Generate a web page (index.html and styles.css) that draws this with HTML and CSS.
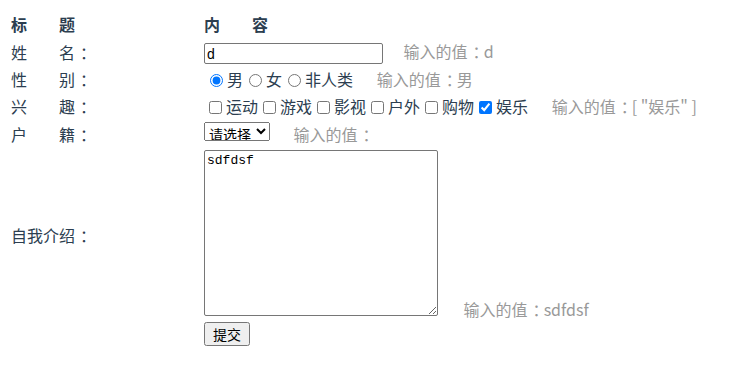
FILE: index.html
```html
<!DOCTYPE html>
<html lang="zh-CN">
<head>
    <meta charset="UTF-8">
    <title>表单绑定</title>
    <link rel="stylesheet" href="styles.css">
</head>
<body>
    <div id="app">
        <table class="form-table">
            <colgroup>
                <col class="col-label">
                <col>
            </colgroup>
            <tr>
                <th>标&emsp;&emsp;题</th>
                <th>内&emsp;&emsp;容</th>
            </tr>
            <tr>
                <td>姓&emsp;&emsp;名<span class="colon">：</span></td>
                <td>
                    <input type="text" class="text-input" value="d">
                    <span class="echo">输入的值<span class="colon">：</span>d</span>
                </td>
            </tr>
            <tr>
                <td>性&emsp;&emsp;别<span class="colon">：</span></td>
                <td>
                    <input type="radio" name="sex" checked>男<input type="radio" name="sex">女<input type="radio" name="sex">非人类
                    <span class="echo">输入的值<span class="colon">：</span>男</span>
                </td>
            </tr>
            <tr>
                <td>兴&emsp;&emsp;趣<span class="colon">：</span></td>
                <td>
                    <input type="checkbox">运动<input type="checkbox">游戏<input type="checkbox">影视<input type="checkbox">户外<input type="checkbox">购物<input type="checkbox" checked>娱乐
                    <span class="echo">输入的值<span class="colon">：</span>[ "娱乐" ]</span>
                </td>
            </tr>
            <tr>
                <td>户&emsp;&emsp;籍<span class="colon">：</span></td>
                <td>
                    <select class="city">
                        <option>请选择</option>
                        <option>北京</option>
                        <option>上海</option>
                    </select>
                    <span class="echo">输入的值<span class="colon">：</span></span>
                </td>
            </tr>
            <tr>
                <td>自我介绍<span class="colon">：</span></td>
                <td>
                    <textarea class="intro">sdfdsf</textarea>
                    <span class="echo echo-wide">输入的值<span class="colon">：</span>sdfdsf</span>
                </td>
            </tr>
            <tr>
                <td></td>
                <td><button class="submit">提交</button></td>
            </tr>
        </table>
    </div>
</body>
</html>
```

FILE: styles.css
```css
body {
    margin: 8px;
    font-family: "Noto Sans CJK SC", "Microsoft YaHei", sans-serif;
    font-size: 16px;
    color: #2c3e50;
}

/* 冒号挪到字框中间，和微软雅黑一致 */
.colon {
    padding-left: 5px;
    letter-spacing: -5px;
}

.form-table {
    border-spacing: 2px;
    margin-top: 2px;
}

.form-table th,
.form-table td {
    padding: 1px;
    line-height: 23px;
    text-align: left;
    white-space: nowrap;
}

.col-label {
    width: 191px;
}

.text-input {
    box-sizing: border-box;
    width: 179px;
    height: 21px;
    padding: 1px 2px;
    font-size: 14px;
    font-family: "Liberation Sans", Arial, sans-serif;
    border: 1px solid #767676;
    border-radius: 2px;
    vertical-align: middle;
}

input[type="radio"] {
    margin: 3px 4px 0 6px;
    vertical-align: -1px;
}

input[type="checkbox"] {
    margin: 3px 4px 3px 5px;
    vertical-align: -1px;
}

.echo {
    margin-left: 20px;
    color: #999;
}

.text-input + .echo {
    margin-left: 17px;
}

.echo-wide {
    margin-left: 22px;
}

.city {
    width: 66px;
    height: 19px;
    font-size: 14px;
    font-family: "Noto Sans CJK SC", sans-serif;
    color: #000;
    padding: 0;
    vertical-align: 1px;
}

.intro {
    box-sizing: border-box;
    width: 234px;
    height: 166px;
    margin-top: 0;
    font-family: "Liberation Mono", monospace;
    font-size: 13px;
    border: 1px solid #767676;
    border-radius: 2px;
    vertical-align: baseline;
}

.submit {
    box-sizing: border-box;
    height: 24px;
    padding: 0 7px;
    margin: -3px 0 0;
    font-size: 14px;
    font-family: "Noto Sans CJK SC", sans-serif;
    vertical-align: top;
}
```
